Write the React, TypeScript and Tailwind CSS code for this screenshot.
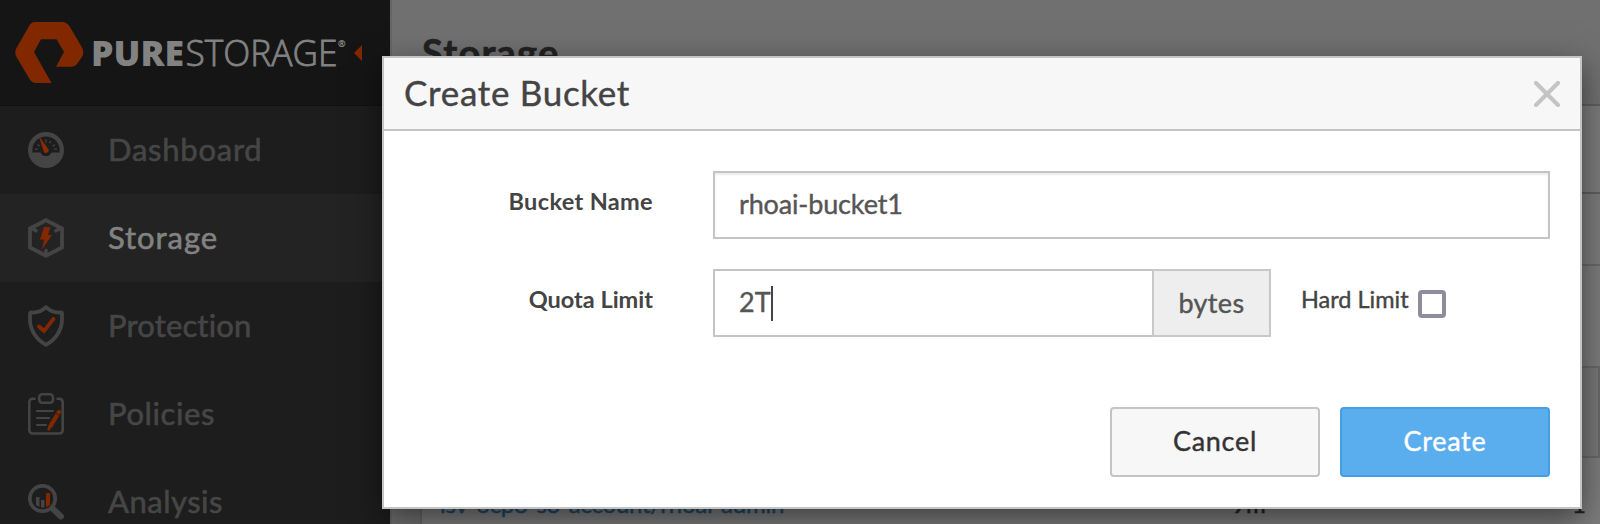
import React from 'react';

function Logo() {
  return (
    <svg width="348" height="62" viewBox="15 21 348 62" className="block">
      <path
        fill="#822800"
        d="M35 22H62Q67 22 70 27L82 47.500Q84.500 52.500 82 57L77 64Q75 66.800 71 66.800H56L64 52L56.500 39.300H41L34 52L51.500 83H36Q32 83 29.500 79L16.500 57Q14 52.500 16.500 48L28.500 27Q31 22 35 22Z"
      />
      <text x="91" y="66.200" textLength="93" lengthAdjust="spacingAndGlyphs" fontFamily="Open Sans" fontWeight="800" fontSize="36" fill="#828282">PURE</text>
      <text x="185.500" y="66.200" textLength="152" lengthAdjust="spacingAndGlyphs" fontFamily="Open Sans" fontWeight="300" stroke="#828282" strokeWidth=".8" fontSize="36" fill="#828282">STORAGE</text>
      <text x="338" y="46.500" fontFamily="Open Sans" fontSize="9" stroke="#828282" strokeWidth=".3" fill="#828282">®</text>
      <path d="M362 45V61L354 53Z" fill="#822800" />
    </svg>
  );
}

function GaugeIcon() {
  return (
    <svg width="36" height="36" viewBox="0 0 36 36">
      <circle cx="18" cy="18" r="18" fill="#444" />
      <path d="M4.500 20.500A13.700 13.700 0 1 1 31.500 20.500H23.500A6 6 0 0 1 12.500 20.500Z" fill="#1d1d1d" />
      <path d="M7 17.200H10M9.500 12.500L12 14.200M18 7.500V10.500M22.500 9L21.500 11.300M27 12.500L24.500 14.200M29 17.200H26" stroke="#444" strokeWidth="1.300" />
      <path d="M10.800 4L20.600 17.500A2.700 2.700 0 0 1 15.800 19.800Z" fill="#8a2b08" />
    </svg>
  );
}

function StorageIcon() {
  return (
    <svg width="36" height="40" viewBox="0 0 36 40">
      <path d="M18 2.200L34 10.500V29.500L18 37.800L2 29.500V10.500Z" fill="none" stroke="#444" strokeWidth="3.800" />
      <path d="M3 10L8 12.800M33 10L28 12.800M18 37V32.500" stroke="#444" strokeWidth="3.500" strokeLinecap="round" />
      <path d="M16 9H22.500L20 17H24L14 31.500L16 21.500H12Z" fill="#822800" />
    </svg>
  );
}

function ShieldIcon() {
  return (
    <svg width="36" height="42" viewBox="0 0 36 42">
      <path d="M18 2.200C13.500 6.500 8 8 3 7.500Q2 7.500 2 9V16C2.500 25 8 34.500 18 39.800C28 34.500 33.500 25 34 16V9Q34 7.500 33 7.500C28 8 22.500 6.500 18 2.200Z" fill="none" stroke="#444" strokeWidth="3.800" strokeLinejoin="round" />
      <path d="M11 21.500L16 26L25.500 14" fill="none" stroke="#822800" strokeWidth="3.800" strokeLinecap="round" />
    </svg>
  );
}

function ClipboardIcon() {
  return (
    <svg width="36" height="42" viewBox="0 0 36 42">
      <path d="M7.500 5.700H5Q1.300 5.700 1.300 9.500V37Q1.300 40.500 5 40.500H31Q34.700 40.500 34.700 37V9.500Q34.700 5.700 31 5.700H28.500" fill="none" stroke="#444" strokeWidth="2.600" />
      <rect x="11.200" y="1.300" width="13.800" height="8.500" rx="3" fill="none" stroke="#444" strokeWidth="2.600" />
      <path d="M9 18H25M9 25H21M9 32H18" stroke="#444" strokeWidth="2.200" strokeLinecap="round" />
      <path d="M31 19L22.500 33" stroke="#822800" strokeWidth="4.200" strokeLinecap="round" />
      <path d="M20.700 36.200L22 33.500" stroke="#822800" strokeWidth="2.800" strokeLinecap="round" />
      <path d="M27.500 20L31.500 22.500" stroke="#1d1d1d" strokeWidth=".8" />
    </svg>
  );
}

function AnalysisIcon() {
  return (
    <svg width="36" height="36" viewBox="0 0 36 36">
      <circle cx="14.500" cy="14.500" r="12.700" fill="none" stroke="#444" strokeWidth="3.800" />
      <path d="M24.500 24.500L33 32.500" stroke="#444" strokeWidth="6" strokeLinecap="round" />
      <path d="M8 13H11.500V23L8 21ZM13 16H16.500V23.500H13Z" fill="#444" />
      <path d="M18 9H22V21L18 23.200Z" fill="#822800" />
    </svg>
  );
}

const items = [
  { label: 'Dashboard', icon: <GaugeIcon />, row: 'text-[#464646]', spacing: 'tracking-[0.75px]' },
  { label: 'Storage', icon: <StorageIcon />, row: 'bg-[#232323] text-[#828282]', spacing: 'tracking-[0.95px]' },
  { label: 'Protection', icon: <ShieldIcon />, row: 'text-[#464646]', spacing: 'tracking-[0.15px]' },
  { label: 'Policies', icon: <ClipboardIcon />, row: 'text-[#464646]', spacing: 'tracking-[0.6px]' },
  { label: 'Analysis', icon: <AnalysisIcon />, row: 'text-[#464646]', spacing: 'tracking-[0.5px]' },
];

function Sidebar() {
  return (
    <aside className="w-[390px] shrink-0 bg-[#1d1d1d]">
      <div className="h-[106px] border-b border-[#111] bg-[#151515] pt-[21px] pl-[15px]">
        <Logo />
      </div>
      <nav>
        {items.map((item) => (
          <div
            key={item.label}
            className={`flex h-[88px] items-center pl-7 text-[31px] leading-none [-webkit-text-stroke:0.6px] ${item.row}`}
          >
            <span className="w-20">{item.icon}</span>
            <span className={`pb-[2px] ${item.spacing}`}>{item.label}</span>
          </div>
        ))}
      </nav>
    </aside>
  );
}

function Backdrop() {
  return (
    <main className="min-w-0 grow border-l-2 border-[#666] bg-[#707070]">
      <div className="h-[104px] pt-[32px] pl-[30px] text-[38px] leading-[40px] font-bold tracking-[1.2px] text-[#222] [-webkit-text-stroke:0.6px]">Storage</div>
      <div className="h-[90px] border-y-2 border-[#5f5f5f] bg-[#7c7c7c]" />
      <div className="h-[72px] border-b-2 border-[#686868] bg-[#7c7c7c]" />
      <div className="h-[100px] bg-[#7c7c7c]" />
      <div className="ml-[28px] h-[158px] border-l-2 border-[#666] bg-[#7c7c7c]">
        <div className="h-[92px] border-2 border-[#686868] bg-[#777]" />
        <div className="flex pt-[30px] pl-[18px] text-[24px] leading-[32px] [-webkit-text-stroke:0.5px]">
          <span className="w-[792px] tracking-[-0.25px] text-[#1f4766]">isv-ocp8-s3-account/rhoai-admin</span>
          <span className="w-[340px] text-[#222]">9m</span>
          <span className="text-[#222]">1</span>
        </div>
      </div>
    </main>
  );
}

function Modal() {
  return (
    <section className="absolute top-[56px] left-[382px] h-[453px] w-[1200px] border-2 border-[#c4c4c4] bg-white text-[#444] shadow-[0_10px_30px_rgba(0,0,0,0.5)] [-webkit-text-stroke:0.4px]">
      <header className="flex h-[73px] items-center justify-between border-b-2 border-[#c4c4c4] bg-[#f7f7f7] pr-[20px] pl-[20px]">
        <h2 className="pb-[2px] text-[35px] leading-none tracking-[0.7px]">Create Bucket</h2>
        <svg width="26" height="26" viewBox="0 0 26 26">
          <path d="M2 2L24 24M24 2L2 24" stroke="#c4c4c4" strokeWidth="4.200" strokeLinecap="round" />
        </svg>
      </header>
      <div className="pt-10 pr-[30px]">
        <div className="flex h-[68px]">
          <label className="mr-[60px] w-[269px] pt-[16px] text-right text-[23.500px] leading-[28px] font-bold tracking-[0.35px] [-webkit-text-stroke:0px]">Bucket Name</label>
          <div className="flex grow items-center border-2 border-[#c4c4c4] px-6 pb-px text-[27px] tracking-[-0.15px] text-[#555] shadow-[inset_0_2px_2px_rgba(0,0,0,0.075)]">rhoai-bucket1</div>
        </div>
        <div className="mt-[30px] flex h-[68px]">
          <label className="mr-[60px] w-[269px] pt-[16px] text-right text-[23.500px] leading-[28px] font-bold [-webkit-text-stroke:0px]">Quota Limit</label>
          <div className="flex w-[439px] items-center border-2 border-r-0 border-[#c4c4c4] pl-6 text-[27px] text-[#555]">
            <span className="pb-px">2T</span>
            <span className="h-[35px] w-[2px] bg-[#444]" />
          </div>
          <div className="flex w-[119px] items-center justify-center border-2 border-[#c8c8c8] bg-[#eee] text-[27px] tracking-[0.4px] text-[#555]">bytes</div>
          <span className="ml-[30px] w-[117px] pt-[16px] text-[23.500px] leading-[28px] whitespace-nowrap">Hard Limit</span>
          <span className="mt-[21px] size-7 rounded-[4px] border-4 border-[#8f8c9e]" />
        </div>
        <div className="mt-[70px] flex justify-end gap-5">
          <button className="h-[70px] w-[210px] rounded-[4px] border-2 border-[#c4c4c4] bg-[#f7f7f7] pb-px text-[27px] tracking-[0.7px] text-[#333]">Cancel</button>
          <button className="h-[70px] w-[210px] rounded-[4px] border-2 border-[#469fe2] bg-[#5aaeee] pb-px text-[27px] tracking-[0.7px] text-white">Create</button>
        </div>
      </div>
    </section>
  );
}

export default function App() {
  return (
    <div className="relative flex h-[524px] w-[1600px] overflow-hidden font-['Lato',sans-serif]">
      <Sidebar />
      <Backdrop />
      <Modal />
    </div>
  );
}
